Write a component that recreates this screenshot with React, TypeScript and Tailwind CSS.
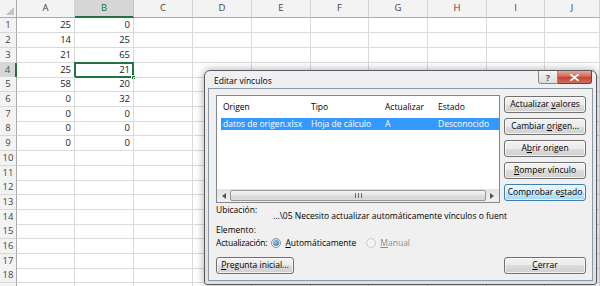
const COLS = ["A", "B", "C", "D", "E", "F", "G", "H", "I", "J"];

const ROW_H = [
  "h-[15px]", "h-[15px]", "h-[15px]", "h-[14px]", "h-[15px]", "h-[15px]", "h-[14px]",
  "h-[15px]", "h-[15px]", "h-[15px]", "h-[14px]", "h-[15px]", "h-[15px]", "h-[14px]",
  "h-[15px]", "h-[15px]", "h-[14px]", "h-[15px]", "h-[15px]",
];

const colA = [25, 14, 21, 25, 58, 0, 0, 0, 0];
const colB = [0, 25, 65, 21, 20, 32, 0, 0, 0];

const GRID = "grid grid-cols-[17px_58px_59px_59px_59px_59px_58px_59px_59px_58px_1fr]";

const Sheet = () => {
  return (
    <div className="font-['Open_Sans',sans-serif] text-[9.5px] text-[#222]">
      <div className={`${GRID} h-[18px]`}>
        <div className="relative bg-[#f3f3f3] border-r border-b border-[#ababab]">
          <svg className="absolute right-[2px] bottom-[2px]" width="8" height="8" viewBox="0 0 8 8">
            <polygon points="8,0 8,8 0,8" fill="#c4c4c4" />
          </svg>
        </div>
        {COLS.map((c) =>
          c === "B" ? (
            <div key={c} className="flex items-center justify-center bg-[#d6d6d6] text-[#217346] border-r border-[#c6c6c6] border-b-2 border-b-[#217346]">
              {c}
            </div>
          ) : (
            <div key={c} className="flex items-center justify-center bg-[#f3f3f3] text-[#444] border-r border-[#d4d4d4] border-b border-b-[#ababab]">
              {c}
            </div>
          )
        )}
      </div>
      {ROW_H.map((h, i) => (
        <div key={i} className={`${GRID} ${h}`}>
          {i === 3 ? (
            <div className="flex items-center justify-center bg-[#d6d6d6] text-[#217346] border-b border-[#c6c6c6] border-r-2 border-r-[#217346]">
              {i + 1}
            </div>
          ) : (
            <div className="flex items-center justify-center bg-[#f3f3f3] text-[#444] border-b border-[#d9d9d9] border-r border-r-[#ababab]">
              {i < 18 ? i + 1 : null}
            </div>
          )}
          {COLS.map((c) => (
            <div key={c} className="relative flex items-center justify-end pr-[3px] border-r border-b border-[#dadada]">
              {c === "A" && colA[i] !== undefined ? colA[i] : null}
              {c === "B" && colB[i] !== undefined ? colB[i] : null}
              {c === "B" && i === 3 && (
                <>
                  <div className="absolute -left-[1px] -top-[1px] -right-[1px] -bottom-[1px] border-2 border-[#217346]" />
                  <div className="absolute -right-[3px] -bottom-[3px] w-[5px] h-[5px] bg-[#217346] border border-white" />
                </>
              )}
            </div>
          ))}
        </div>
      ))}
    </div>
  );
};

const WinButton = ({ children, def = false, className = "" }: { children: React.ReactNode; def?: boolean; className?: string }) => {
  return (
    <div
      className={`h-[17px] flex items-center justify-center rounded-[3px] border text-black shadow-[inset_0_0_0_1px_rgba(255,255,255,0.7)] ${
        def
          ? "border-[#3c7fb1] bg-[linear-gradient(#eaf6fd,#d9f0fc_50%,#bee6fd_50%,#a7d9f5)]"
          : "border-[#707070] bg-[linear-gradient(#f2f2f2,#ebebeb_50%,#dddddd_50%,#cfcfcf)]"
      } ${className}`}
    >
      <span className="whitespace-nowrap">{children}</span>
    </div>
  );
};

const Radio = ({ checked = false, disabled = false }: { checked?: boolean; disabled?: boolean }) => {
  return (
    <div
      className={`w-[10px] h-[10px] flex-none rounded-full border flex items-center justify-center ${
        disabled ? "border-[#c9c9c9] bg-[#f4f4f4]" : "border-[#8e8f8f] bg-[linear-gradient(#dcdcdc,#fbfbfb)]"
      }`}
    >
      {checked && <div className="w-[6px] h-[6px] rounded-full bg-[radial-gradient(circle_at_35%_35%,#8ecbf3,#1f6db1)]" />}
    </div>
  );
};

const Dialog = () => {
  return (
    <div className="absolute left-[204px] top-[70px] w-[393px] h-[215px] flex flex-col rounded-t-[6px] rounded-b-[3px] border border-[#5a5a5a] bg-[linear-gradient(#eef0f3,#dde1e6)] px-[3px] pb-[3px] shadow-[0_0_8px_rgba(0,0,0,0.35)] font-['Open_Sans',sans-serif] text-[8.5px] text-black">
      <div className="h-[17px] flex">
        <span className="pl-[6px] pt-[4px] leading-[12px]">Editar vínculos</span>
        <div className="ml-auto mr-[1px] flex h-[13px]">
          <div className="w-[20px] flex items-center justify-center rounded-bl-[3px] border border-t-0 border-[#8b8b8b] bg-[linear-gradient(#f5f5f5,#dcdcdc)] text-[#555] text-[9px] font-bold leading-none">
            ?
          </div>
          <div className="w-[34px] flex items-center justify-center rounded-br-[3px] border border-t-0 border-l-0 border-[#7a3a33] bg-[linear-gradient(#e8a99f,#d0604e_50%,#c2412e_50%,#d36e5a)]">
            <svg width="9" height="7" viewBox="0 0 9 7">
              <path d="M1 0.8 L8 6.2 M8 0.8 L1 6.2" stroke="#fff" strokeWidth="1.8" strokeLinecap="round" />
            </svg>
          </div>
        </div>
      </div>
      <div className="flex-1 flex flex-col border border-[#8d98a6] bg-[#f0f0f0] pl-[7px] pr-[6px] pt-[6px] pb-[6px]">
        <div className="flex gap-[4px]">
          <div className="w-[284px] h-[108px] flex flex-col border border-[#828790] bg-white">
            <div className="flex-1 pl-[4px]">
              <div className="grid grid-cols-[88px_74px_53px_60px] h-[22px] items-center">
                <span className="pl-[2px]">Origen</span>
                <span className="pl-[2px]">Tipo</span>
                <span className="pl-[2px]">Actualizar</span>
                <span className="pl-[2px]">Estado</span>
              </div>
              <div className="grid grid-cols-[88px_74px_53px_60px] h-[12px] items-center bg-[#3399ff] text-white">
                <span className="pl-[2px] whitespace-nowrap">datos de origen.xlsx</span>
                <span className="pl-[2px] whitespace-nowrap">Hoja de cálculo</span>
                <span className="pl-[2px]">A</span>
                <span className="pl-[2px]">Desconocido</span>
              </div>
            </div>
            <div className="h-[13px] flex items-center bg-[linear-gradient(#e3e3e3,#f0f0f0)] px-[1px]">
              <div className="w-[12px] flex items-center justify-center">
                <svg width="4" height="6" viewBox="0 0 4 6"><polygon points="4,0 4,6 0,3" fill="#555" /></svg>
              </div>
              <div className="flex-1 h-[11px] flex items-center justify-center rounded-[2px] border border-[#979797] bg-[linear-gradient(#f6f6f6,#e2e2e2_50%,#d5d5d5_50%,#dcdcdc)]">
                <svg width="7" height="5" viewBox="0 0 7 5">
                  <path d="M0.5 0 V5 M3.5 0 V5 M6.5 0 V5" stroke="#6a6a6a" strokeWidth="1" />
                </svg>
              </div>
              <div className="w-[12px] flex items-center justify-center">
                <svg width="4" height="6" viewBox="0 0 4 6"><polygon points="0,0 0,6 4,3" fill="#555" /></svg>
              </div>
            </div>
          </div>
          <div className="w-[82px] mt-[1px] flex flex-col gap-[5px]">
            <WinButton>Actualizar <u>v</u>alores</WinButton>
            <WinButton>Cambiar <u>o</u>rigen...</WinButton>
            <WinButton>A<u>b</u>rir origen</WinButton>
            <WinButton><u>R</u>omper vínculo</WinButton>
            <WinButton def>Comprobar e<u>s</u>tado</WinButton>
          </div>
        </div>
        <div className="flex mt-[1px] leading-[12px]">
          <span className="w-[57px]">Ubicación:</span>
          <span className="pt-[6px] whitespace-nowrap font-medium">...\05 Necesito actualizar automáticamente vínculos o fuent</span>
        </div>
        <div className="mt-[2px] leading-[12px]">Elemento:</div>
        <div className="flex items-center mt-[1px] leading-[12px]">
          <span className="whitespace-nowrap tracking-[-0.2px]">Actualización:</span>
          <div className="ml-[4px]"><Radio checked /></div>
          <span className="ml-[4px] whitespace-nowrap"><u>A</u>utomáticamente</span>
          <div className="ml-[10px]"><Radio disabled /></div>
          <span className="ml-[4px] text-[#8d8d8d]"><u>M</u>anual</span>
        </div>
        <div className="mt-auto flex justify-between">
          <WinButton className="w-[78px]"><u>P</u>regunta inicial...</WinButton>
          <WinButton className="w-[82px]"><u>C</u>errar</WinButton>
        </div>
      </div>
    </div>
  );
};

export default function App() {
  return (
    <div className="relative w-[600px] h-[286px] overflow-hidden bg-white">
      <Sheet />
      <Dialog />
    </div>
  );
}
